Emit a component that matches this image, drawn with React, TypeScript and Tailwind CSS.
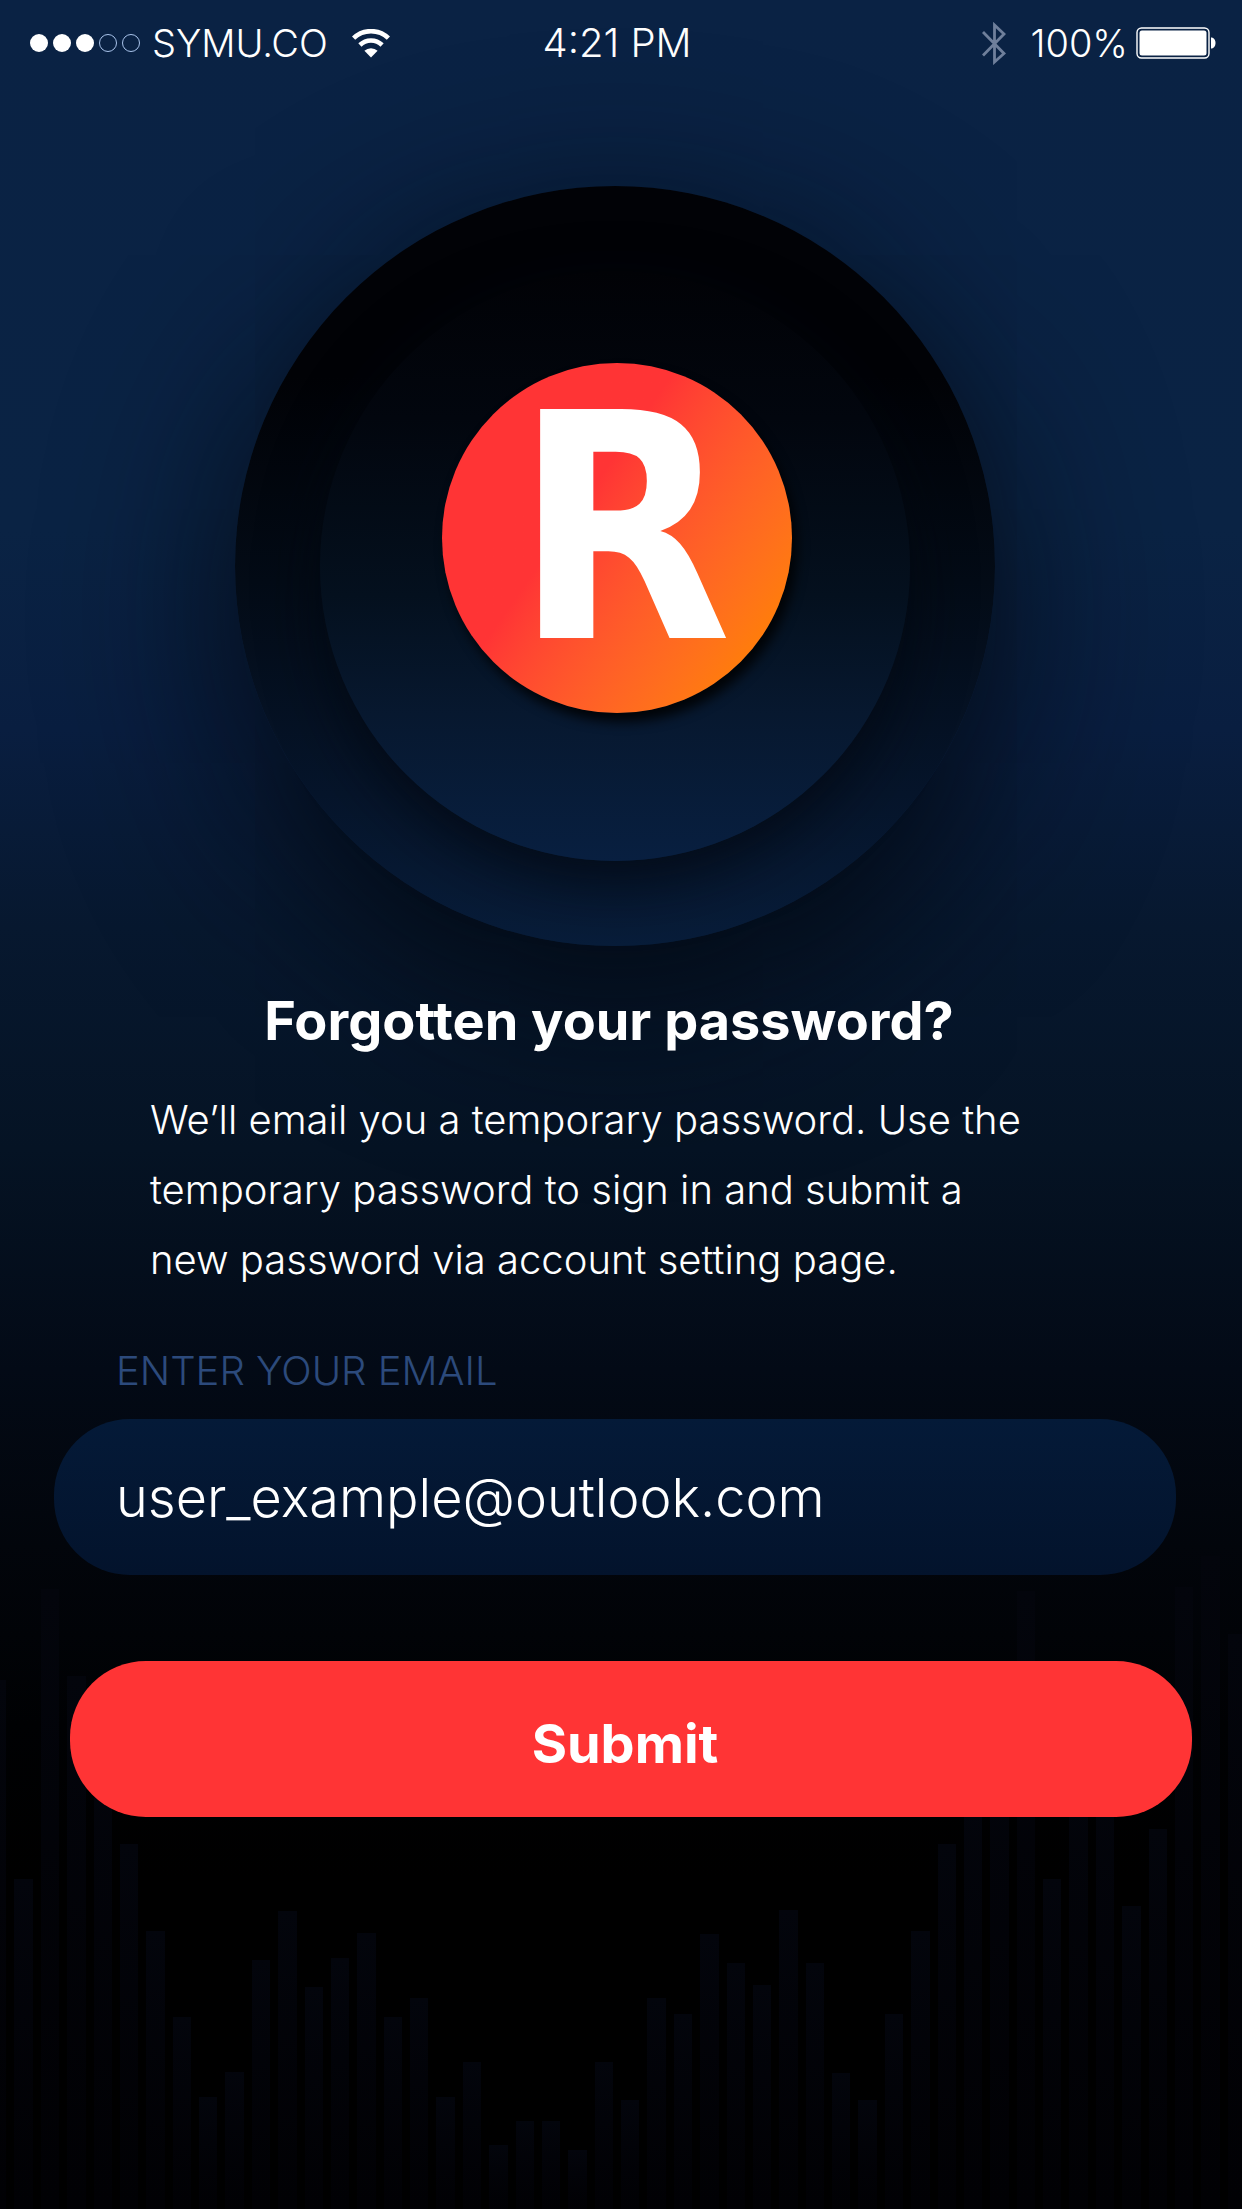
import { useState } from "react";

// Distance from the page bottom to the top of each equalizer bar.
const BAR_HEIGHTS = [
  529, 330, 620, 533, 472, 365, 278, 192, 112, 137, 249, 298, 222, 251, 276, 192,
  211, 112, 147, 64, 88, 88, 59, 147, 109, 211, 195, 275, 246, 224, 299, 246,
  136, 109, 195, 278, 365, 412, 465, 618, 330, 455, 433, 303, 380, 622, 653, 575,
];

function Equalizer() {
  return (
    <div
      aria-hidden="true"
      className="pointer-events-none absolute inset-x-0 bottom-0 -mr-1 -ml-3 flex items-end gap-2"
    >
      {BAR_HEIGHTS.map((height, i) => (
        <div
          key={i}
          className="flex-1 bg-linear-to-b from-[#03050c] to-[#010104]"
          style={{ height }}
        />
      ))}
    </div>
  );
}

function WifiIcon() {
  return (
    <svg viewBox="0 0 38 29" className="h-[29px] w-[38px]" aria-label="Wi-Fi" role="img">
      <g fill="none" stroke="white" strokeWidth="4.6">
        <path d="M1.6 9.2 A25 25 0 0 1 36.4 9.2" />
        <path d="M7.9 16 A16 16 0 0 1 30.1 16" />
      </g>
      <path d="M12.4 21.8 A9.6 9.6 0 0 1 25.6 21.8 L19 28.6 Z" fill="white" />
    </svg>
  );
}

function BluetoothIcon() {
  return (
    <svg viewBox="0 0 24 43" className="h-[43px] w-6" aria-label="Bluetooth" role="img">
      <path
        d="M1 10 L22 31.5 L12.5 40 V3 L22 12 L1 33.5"
        fill="none"
        stroke="#6f7f9b"
        strokeWidth="2.8"
      />
    </svg>
  );
}

function BatteryIcon() {
  return (
    <svg viewBox="0 0 80 32" className="h-8 w-20" aria-label="Battery full" role="img">
      <rect x="1" y="1" width="72" height="30" rx="4.5" fill="none" stroke="white" strokeWidth="1.4" />
      <rect x="3.5" y="3.5" width="67" height="25" rx="2.5" fill="white" />
      <path d="M75 10.5 C81 10.5 81 21.5 75 21.5 Z" fill="white" />
    </svg>
  );
}

function StatusBar() {
  return (
    <header className="grid h-[86px] grid-cols-[42fr_15fr_43fr] items-center pr-[26px] pl-[30px] text-[38px] leading-none font-light">
      <div className="flex items-center">
        <div className="flex gap-[5px]" role="img" aria-label="Signal 3 of 5">
          <span className="size-[18px] rounded-full bg-white" />
          <span className="size-[18px] rounded-full bg-white" />
          <span className="size-[18px] rounded-full bg-white" />
          <span className="size-[18px] rounded-full border border-[#a9c4ec]" />
          <span className="size-[18px] rounded-full border border-[#a9c4ec]" />
        </div>
        <span className="mr-6 ml-3">SYMU.CO</span>
        <WifiIcon />
      </div>
      <time className="text-center text-[40px] whitespace-nowrap">4:21 PM</time>
      <div className="flex items-center justify-end">
        <BluetoothIcon />
        <span className="mr-2 ml-6">100%</span>
        <BatteryIcon />
      </div>
    </header>
  );
}

function Logo() {
  return (
    <div className="mt-[100px] flex justify-center pr-3">
      <div className="flex size-[760px] shrink-0 items-center justify-center rounded-full bg-[linear-gradient(to_bottom,#010206_0%,#010206_25%,#030b16_52%,#06152b_80%,#081d3a_100%)] shadow-[0_50px_170px_10px_rgba(3,9,18,0.9)]">
        <div className="flex size-[590px] items-center justify-center rounded-full bg-[linear-gradient(to_bottom,#010206_0%,#02060e_25%,#04101e_55%,#07182f_75%,#081f40_100%)] pb-14 pl-1 shadow-[0_20px_60px_rgba(2,8,16,0.8)]">
          <div className="flex size-[350px] items-center justify-center rounded-full bg-linear-125 from-[#ff3435] from-40% to-[#ff7b0d] to-85% pb-4 pl-3 shadow-[5px_9px_12px_rgba(0,0,0,0.85)]">
            <span className="font-['DejaVu_Sans_Condensed','DejaVu_Sans',sans-serif] text-[314px] leading-none font-bold">
              R
            </span>
          </div>
        </div>
      </div>
    </div>
  );
}

export default function App() {
  const [email, setEmail] = useState("user_example@outlook.com");
  return (
    <div className="relative flex min-h-screen flex-col overflow-hidden bg-black bg-[linear-gradient(to_bottom,#0a2244_0%,#0a2344_24%,#091e40_33%,#07182f_42%,#051324_52%,#030a16_62%,#02050b_70%,#000103_78%,#000_85%)] font-[Inter,sans-serif] text-white">
      <Equalizer />
      <div className="relative flex flex-col">
        <StatusBar />
        <main>
          <Logo />
          <h1 className="mt-[45px] pr-6 text-center text-[54px] leading-[60px] font-bold">
            Forgotten your password?
          </h1>
          <p className="mt-[34px] ml-[150px] text-[40px] leading-[70px] font-light">
            We’ll email you a temporary password. Use the
            <br />
            temporary password to sign in and submit a
            <br />
            new password via account setting page.
          </p>
          <form onSubmit={(e) => e.preventDefault()}>
            <label
              htmlFor="email"
              className="mt-[52px] ml-[116px] block text-[40px] leading-[48px] font-light text-[#2c4a7c]"
            >
              ENTER YOUR EMAIL
            </label>
            <div className="mt-6 mr-[66px] ml-[54px] flex">
              <input
                id="email"
                type="email"
                value={email}
                onChange={(e) => setEmail(e.target.value)}
                className="h-[156px] w-full rounded-[76px] bg-linear-to-b from-[#041a38] to-[#03132c] px-[62px] text-[54px] font-light outline-none"
              />
            </div>
            <div className="mt-[86px] mr-[50px] ml-[70px] flex">
              <button
                type="submit"
                className="h-[156px] w-full rounded-[76px] bg-[#ff3435] pt-2 pr-3 text-[54px] font-bold"
              >
                Submit
              </button>
            </div>
          </form>
        </main>
      </div>
    </div>
  );
}
